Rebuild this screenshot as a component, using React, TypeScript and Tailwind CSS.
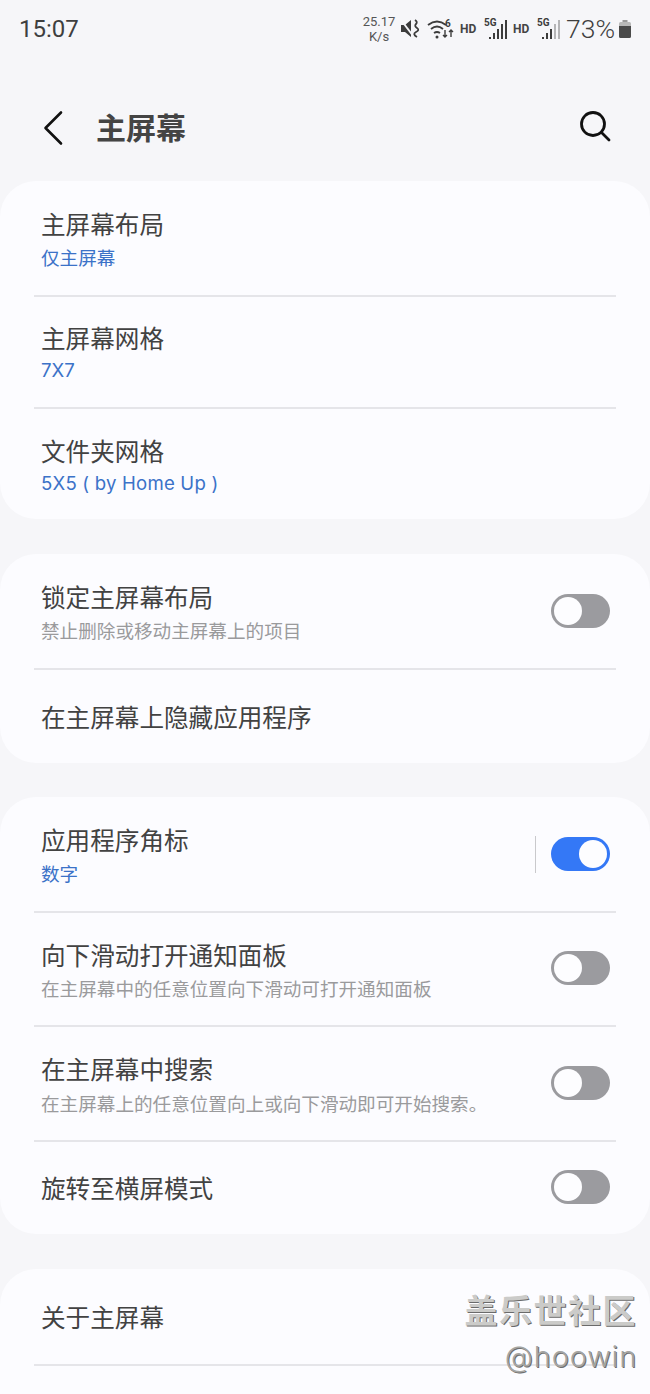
const CJK = "font-['Roboto','Noto_Sans_CJK_SC',sans-serif]";

function Toggle({ on = false, nudge = false }: { on?: boolean; nudge?: boolean }) {
  return (
    <div
      className={`flex h-[34px] w-[59px] items-center rounded-full p-[3px] ${
        on ? "justify-end bg-[#3478f6]" : "justify-start bg-[#9b9b9f]"
      } ${nudge ? "-mt-[2px]" : ""}`}
    >
      <div className="size-[28px] rounded-full bg-[#fdfdff]" />
    </div>
  );
}

function Divider() {
  return <div className="mx-[34px] h-[2px] bg-[#e5e5e9]" />;
}

interface RowProps {
  title: string;
  sub?: string;
  blue?: boolean;
  toggle?: "on" | "off";
  height: number;
  sep?: boolean;
  nudge?: boolean;
  textClass?: string;
  subClass?: string;
}

function Row({
  title,
  sub,
  blue,
  toggle,
  height,
  sep,
  nudge,
  textClass = "pt-[4px]",
  subClass = "mt-[3px]",
}: RowProps) {
  return (
    <div className="flex items-center pl-[41px] pr-[40px]" style={{ height }}>
      <div className={`flex min-w-0 flex-1 flex-col ${textClass}`}>
        <div className="text-[24.6px] leading-[34px] text-[#424242]">{title}</div>
        {sub && (
          <div
            className={`font-['Inter','Noto_Sans_CJK_SC',sans-serif] text-[18.6px] leading-[26px] ${subClass} ${
              blue ? "text-[#3b72c8]" : "text-[#9a9a9c]"
            }`}
          >
            {sub}
          </div>
        )}
      </div>
      {sep && <div className="mr-[15px] h-[37px] w-[1px] bg-[#c9c9cc]" />}
      {toggle && <Toggle on={toggle === "on"} nudge={nudge} />}
    </div>
  );
}

function Signal({ dim }: { dim?: boolean }) {
  return (
    <svg width="23" height="24" viewBox="0 0 23 24" className="text-[#3c3c3c]">
      <text x="0" y="9" fontSize="10" fontWeight="700" fontFamily="Roboto" fill="currentColor">
        5G
      </text>
      <rect x="5" y="20" width="2" height="2" fill="currentColor" />
      <rect x="9" y="16" width="2" height="6" fill="currentColor" />
      <rect x="13" y="12" width="2" height="10" fill="currentColor" />
      <rect x="17" y="7" width="2" height="15" fill="currentColor" opacity={dim ? 0.35 : 1} />
      <rect x="21" y="3" width="2" height="19" fill="currentColor" opacity={dim ? 0.35 : 1} />
    </svg>
  );
}

function StatusBar() {
  return (
    <div className="flex h-[58px] items-center justify-between pl-[19px] pr-[18px] text-[#3f3f3f]">
      <span className="text-[24px] leading-none">15:07</span>
      <div className="flex items-center">
        <div className="flex w-[30px] flex-col items-center text-[13px] leading-[15px] text-[#555]">
          <span>25.17</span>
          <span>K/s</span>
        </div>
        <svg width="20" height="22" viewBox="0 0 20 22" className="ml-[6px]">
          <path d="M1 7h4l6-5v17l-6-5H1z" fill="#3c3c3c" />
          <path d="M1 2l13 17" stroke="#f6f6f9" strokeWidth="2" />
          <path d="M15 2q3 2 1 4t1 4-1 4 1 5" stroke="#3c3c3c" strokeWidth="1.8" fill="none" />
        </svg>
        <svg width="27" height="22" viewBox="0 0 27 22" className="ml-[7px]">
          <path d="M1 7q9-7 18 0" stroke="#3c3c3c" strokeWidth="1.8" fill="none" />
          <path d="M4 11q6-5 12 0" stroke="#3c3c3c" strokeWidth="1.8" fill="none" />
          <path d="M7 15q3-2 6 0" stroke="#3c3c3c" strokeWidth="1.8" fill="none" />
          <circle cx="10" cy="19" r="1.5" fill="#3c3c3c" />
          <text x="18" y="9" fontSize="10" fontWeight="700" fontFamily="Roboto" fill="#3c3c3c">
            6
          </text>
          <path d="M18 12v7M16 17l2 2 2-2M24 19v-7M22 14l2-2 2 2" stroke="#3c3c3c" strokeWidth="1.4" fill="none" />
        </svg>
        <span className="ml-[6px] w-[17px] text-[12px] font-bold leading-none text-[#444]">HD</span>
        <span className="ml-[7px]"><Signal /></span>
        <span className="ml-[6px] w-[17px] text-[12px] font-bold leading-none text-[#444]">HD</span>
        <span className="ml-[7px]"><Signal dim /></span>
        <span className="ml-[6px] text-[26.500px] font-light leading-none">73%</span>
        <svg width="14" height="20" viewBox="0 0 13 20" className="ml-[3px]">
          <path d="M4 1h5v2H4z" fill="#9a9a9a" />
          <path d="M2 3h9a1.500 1.500 0 0 1 1.500 1.500V7H.5V4.500A1.500 1.500 0 0 1 2 3z" fill="#b9b9b9" />
          <path d="M.5 7h12v10.500A1.500 1.500 0 0 1 11 19H2a1.500 1.500 0 0 1-1.500-1.500z" fill="#4a4a4a" />
        </svg>
      </div>
    </div>
  );
}

export default function App() {
  return (
    <div className={`relative h-[1394px] w-[650px] overflow-hidden bg-[#f6f6f9] ${CJK}`}>
      <StatusBar />

      <div className="flex h-[123px] items-center justify-between pl-[41px] pr-[38px] pt-[17px]">
        <div className="flex items-center">
          <svg width="24" height="36" viewBox="0 0 24 36" className="text-[#111]">
            <path d="M20 2.500 4.500 18 20 33.500" fill="none" stroke="currentColor" strokeWidth="2.600" strokeLinecap="round" strokeLinejoin="round" />
          </svg>
          <span className="ml-[31px] text-[30px] font-bold text-[#444]">主屏幕</span>
        </div>
        <svg width="34" height="34" viewBox="0 0 34 34" className="-mt-[4px] text-[#111]">
          <circle cx="15" cy="15" r="11.500" fill="none" stroke="currentColor" strokeWidth="2.800" />
          <path d="M23.500 23.500 31 31" fill="none" stroke="currentColor" strokeWidth="2.800" strokeLinecap="round" />
        </svg>
      </div>

      <div className="flex flex-col gap-[35px]">
        <div className="rounded-[36px] bg-[#fcfcff]">
          <Row title="主屏幕布局" sub="仅主屏幕" blue height={114} subClass="mt-[2px] pb-[1px]" />
          <Divider />
          <Row title="主屏幕网格" sub="7X7" blue height={110} subClass="mt-0 pb-[3px]" />
          <Divider />
          <Row title="文件夹网格" sub="5X5 ( by Home Up )" blue height={110} subClass="mt-0 tracking-[0.2px]" />
        </div>

        <div className="rounded-[36px] bg-[#fcfcff]">
          <Row title="锁定主屏幕布局" sub="禁止删除或移动主屏幕上的项目" toggle="off" height={114} subClass="mt-[2px] pb-[1px]" />
          <Divider />
          <Row title="在主屏幕上隐藏应用程序" height={93} />
        </div>

        <div className="-mt-[1px] rounded-[36px] bg-[#fcfcff]">
          <Row title="应用程序角标" sub="数字" blue toggle="on" sep height={114} subClass="mt-[2px] pb-[1px]" />
          <Divider />
          <Row title="向下滑动打开通知面板" sub="在主屏幕中的任意位置向下滑动可打开通知面板" toggle="off" nudge height={112} subClass="mt-[2px] pb-[1px]" />
          <Divider />
          <Row title="在主屏幕中搜索" sub="在主屏幕上的任意位置向上或向下滑动即可开始搜索。" toggle="off" nudge height={113} />
          <Divider />
          <Row title="旋转至横屏模式" toggle="off" nudge height={92} />
        </div>

        <div className="rounded-t-[36px] bg-[#fcfcff] pb-[40px]">
          <Row title="关于主屏幕" height={95} />
          <Divider />
        </div>
      </div>

      <div className="absolute right-[13px] top-[1289px] flex flex-col items-end">
        <span className="text-[33px] font-bold leading-[46px] tracking-[1.500px] text-[#cbcbc9] [text-shadow:1px_1px_0_#6a6a6a]">
          盖乐世社区
        </span>
        <span className="font-['Inter',sans-serif] text-[29px] font-light leading-[44px] tracking-[0.8px] text-[#a5a5a3] [text-shadow:1px_1px_0_#6f6f6f]">
          @hoowin
        </span>
      </div>
    </div>
  );
}
